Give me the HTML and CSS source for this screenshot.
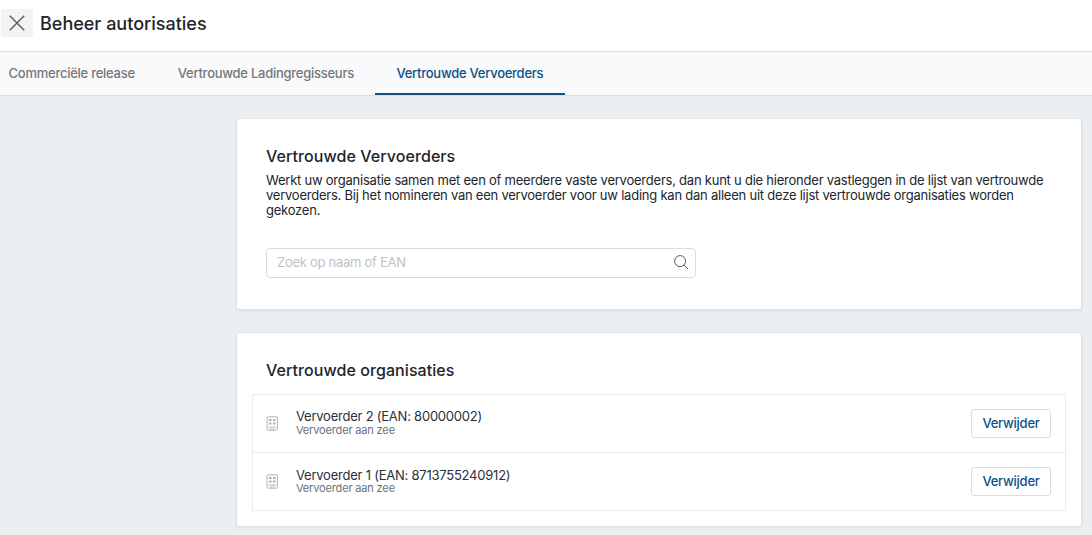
FILE: index.html
```
<!DOCTYPE html>
<html lang="nl">
<head>
  <meta charset="UTF-8" />
  <meta name="viewport" content="width=device-width, initial-scale=1.0"/>
  <title>Beheer autorisaties</title>
  <link rel="stylesheet" href="styles.css">
</head>
<body>
  <header class="header">
    <button class="close" aria-label="Sluiten">
      <svg width="16" height="16" viewBox="0 0 16 16"><path d="M.8.8l14.4 14.4M15.2.8L.8 15.2"/></svg>
    </button>
    <h1>Beheer autorisaties</h1>
  </header>

  <nav class="tabs">
    <a class="tab">Commerciële release</a>
    <a class="tab">Vertrouwde Ladingregisseurs</a>
    <a class="tab active">Vertrouwde Vervoerders</a>
  </nav>

  <main class="content">
    <section class="card search-card">
      <h2>Vertrouwde Vervoerders</h2>
      <p class="intro">Werkt uw organisatie samen met een of meerdere vaste vervoerders, dan kunt u die hieronder vastleggen in de lijst van vertrouwde vervoerders. Bij het nomineren van een vervoerder voor uw lading kan dan alleen uit deze lijst vertrouwde organisaties worden gekozen.</p>
      <div class="search">
        <input type="text" placeholder="Zoek op naam of EAN" />
        <svg width="16" height="16" viewBox="0 0 16 16"><circle cx="7.1" cy="6.1" r="5.5"/><path d="M11 10l4.2 4.2"/></svg>
      </div>
    </section>

    <section class="card list-card">
      <h2>Vertrouwde organisaties</h2>
      <ul class="list">
        <li class="row">
          <svg class="building" width="12" height="15" viewBox="0 0 12 15"><rect x="1" y=".8" width="10.4" height="13.4" rx="1.2"/><path d="M3 4h2.5M7 4h2.5M3 7.5h2.5M7 7.5h2.5" stroke-width="2"/><path d="M2.5 10.9h1.5M8.4 10.9h1.5M4.9 14v-3h2.7v3"/></svg>
          <div class="org">
            <div class="name">Vervoerder 2 (EAN: 80000002)</div>
            <div class="sub">Vervoerder aan zee</div>
          </div>
          <button class="remove">Verwijder</button>
        </li>
        <li class="row">
          <svg class="building" width="12" height="15" viewBox="0 0 12 15"><rect x="1" y=".8" width="10.4" height="13.4" rx="1.2"/><path d="M3 4h2.5M7 4h2.5M3 7.5h2.5M7 7.5h2.5" stroke-width="2"/><path d="M2.5 10.9h1.5M8.4 10.9h1.5M4.9 14v-3h2.7v3"/></svg>
          <div class="org">
            <div class="name">Vervoerder 1 (EAN: 8713755240912)</div>
            <div class="sub">Vervoerder aan zee</div>
          </div>
          <button class="remove">Verwijder</button>
        </li>
      </ul>
    </section>
  </main>
</body>
</html>
```
FILE: styles.css
```
*{box-sizing:border-box;}
body{margin:0;height:535px;overflow:hidden;background:#ebeff2;color:#212529;font:13px/15px Inter,"Liberation Sans",sans-serif;letter-spacing:-.23px;}
h1,h2,p,ul{margin:0;padding:0;}
button,input{font-family:inherit;letter-spacing:inherit;}
svg{fill:none;stroke:#555b60;}

.header{display:flex;align-items:center;gap:7px;height:52px;padding:0 0 5px 1px;background:#fff;border-bottom:1px solid #dadfe2;}
.header h1{padding-top:2px;font-size:18px;line-height:24px;font-weight:500;letter-spacing:0;}
.close{display:flex;align-items:center;justify-content:center;width:32px;height:28px;padding:0;border:0;border-radius:3px;background:#f3f3f3;}
.close svg{stroke-width:1.4;}

.tabs{display:flex;height:44px;background:#f9fafc;border-bottom:1px solid #d8dde1;}
.tab{padding:14px 21.5px 0;font-weight:500;letter-spacing:-.26px;color:#777;border-bottom:2px solid transparent;white-space:nowrap;}
.tab:first-child{padding-left:8.6px;}
.tab.active{padding-left:21px;padding-right:22px;color:#0b5189;border-color:#175078;}

.content{display:flex;flex-direction:column;gap:22px;padding:22px 10px 0 236px;}
.card{background:#fff;border:1px solid #dde2e6;border-radius:3px;box-shadow:0 1px 2px rgba(40,60,80,.08);}
.card h2{font-size:16px;line-height:20px;font-weight:500;letter-spacing:.07px;}
.search-card{height:192px;padding:27px 29px 0;}
.intro{margin-top:7px;}
.search{display:flex;align-items:center;width:430px;height:30px;margin-top:30px;padding:0 6px 0 10px;border:1px solid #d9dcdf;border-radius:4px;}
.search input{flex:1;min-width:0;padding:0 0 2px;border:0;outline:0;background:none;font-size:13px;letter-spacing:-.27px;}
.search input::placeholder{color:#bfc2c5;}

.list-card{height:195px;padding:27px 15px 0;}
.list-card h2{padding-left:14px;}
.list{margin-top:14px;border:1px solid #e9ecee;list-style:none;}
.row{display:flex;align-items:center;height:57px;padding:0 14px 0 13px;}
.row + .row{height:58px;border-top:1px solid #e9ecee;}
.building{stroke:#a9b4bc;}
.org{flex:1;margin-left:18px;padding-bottom:2px;}
.row + .row .name{padding-top:1px;margin-bottom:-1px;}
.name{line-height:15px;color:#2a2f3a;}
.sub{font-size:11px;line-height:13px;letter-spacing:-.16px;color:#66717e;}
.remove{width:80px;height:29px;padding:0 0 2px;border:1px solid #d9dde0;border-radius:3px;background:#fff;color:#0b5189;font-size:13px;font-weight:500;}
```
